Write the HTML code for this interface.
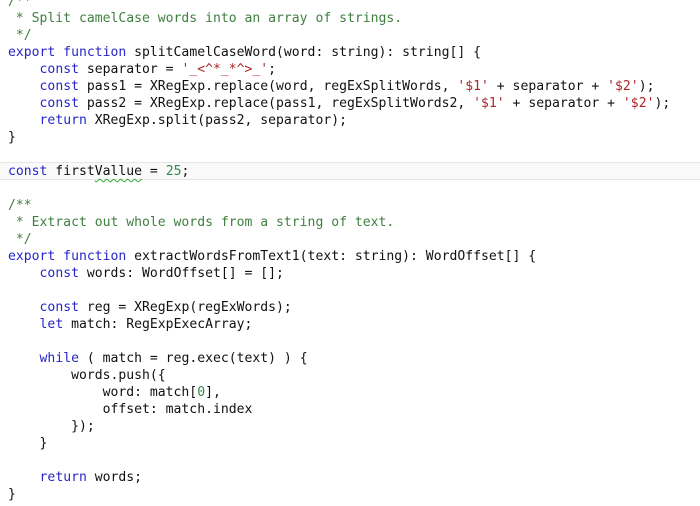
<!DOCTYPE html>
<html><head><meta charset="utf-8"><style>
html,body{margin:0;padding:0;background:#fff;width:700px;height:506px;overflow:hidden}
pre{margin:0;position:absolute;left:8px;top:-7px;font-family:"DejaVu Sans Mono","Liberation Mono",monospace;font-size:13.1px;line-height:17px;color:#111;white-space:pre}
.k{color:#2626c8}.c{color:#3f7f3f}.s{color:#a8282a}.n{color:#2f8a4a}
.u{text-decoration:underline wavy #3a3;text-decoration-thickness:1px;text-underline-offset:3px}
.hl{position:absolute;left:0;top:162px;width:700px;height:16px;background:#fafafa;border-top:1px solid #e6e6e6;border-bottom:1px solid #e6e6e6}
</style></head><body>
<div class="hl"></div>
<pre><span class="c">/**
 * Split camelCase words into an array of strings.
 */</span>
<span class="k">export function</span> splitCamelCaseWord(word: string): string[] {
    <span class="k">const</span> separator = <span class="s">'_&lt;^*_*^&gt;_'</span>;
    <span class="k">const</span> pass1 = XRegExp.replace(word, regExSplitWords, <span class="s">'$1'</span> + separator + <span class="s">'$2'</span>);
    <span class="k">const</span> pass2 = XRegExp.replace(pass1, regExSplitWords2, <span class="s">'$1'</span> + separator + <span class="s">'$2'</span>);
    <span class="k">return</span> XRegExp.split(pass2, separator);
}

<span class="k">const</span> first<span class="u">Vallue</span> = <span class="n">25</span>;

<span class="c">/**
 * Extract out whole words from a string of text.
 */</span>
<span class="k">export function</span> extractWordsFromText1(text: string): WordOffset[] {
    <span class="k">const</span> words: WordOffset[] = [];

    <span class="k">const</span> reg = XRegExp(regExWords);
    <span class="k">let</span> match: RegExpExecArray;

    <span class="k">while</span> ( match = reg.exec(text) ) {
        words.push({
            word: match[<span class="n">0</span>],
            offset: match.index
        });
    }

    <span class="k">return</span> words;
}</pre>
</body></html>
